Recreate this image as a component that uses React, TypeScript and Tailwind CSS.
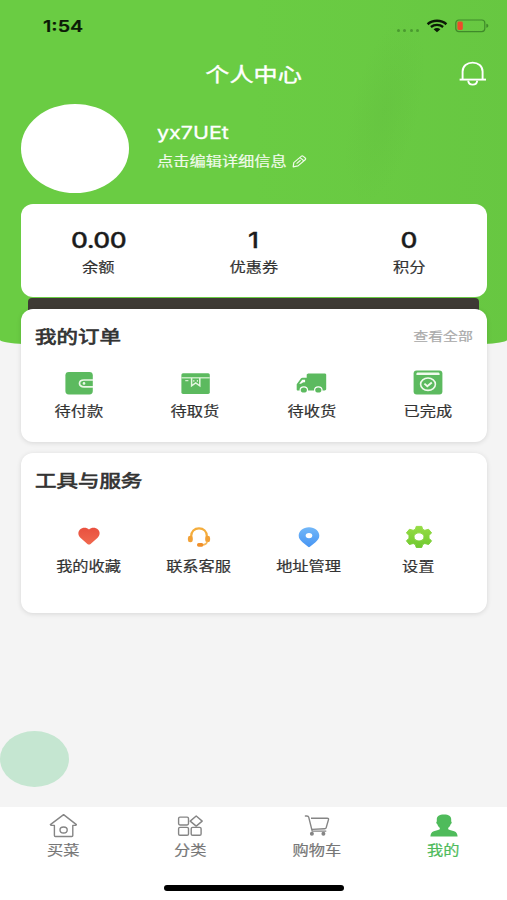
import type { ReactNode } from 'react'
import clsx from 'clsx'

// Glyphs are wide in this layout, so every label is stretched horizontally
function Label({ children, className }: { children: ReactNode; className?: string }) {
  return (
    <span className={clsx('inline-block whitespace-nowrap scale-x-[1.22]', className)}>{children}</span>
  )
}

function WifiIcon() {
  return (
    <svg width="22" height="14" viewBox="0 0 22 14" fill="none" stroke="#0b1a06">
      <path d="M1.6 5.2C6.8 0.6 15.2 0.6 20.4 5.2" strokeWidth="2.5" />
      <path d="M4.9 8C8.4 5.1 13.6 5.1 17.1 8" strokeWidth="2.3" />
      <path d="M7.6 10.2C9.6 8.6 12.4 8.6 14.4 10.2L11 13.2Z" fill="#0b1a06" stroke="none" />
    </svg>
  )
}

function BatteryIcon() {
  return (
    <svg width="34" height="14" viewBox="0 0 34 14" fill="none">
      <rect x="0.8" y="1" width="29" height="11.6" rx="3" stroke="#3f8a2a" strokeWidth="1.2" />
      <rect x="2.4" y="2.6" width="5.4" height="8.4" rx="1.4" fill="#ee4a2c" />
      <path d="M31.3 4.8C34 5.4 34 8.2 31.3 8.8Z" fill="#3f8a2a" />
    </svg>
  )
}

function BellIcon() {
  return (
    <svg width="28" height="26" viewBox="0 0 28 26" fill="none" stroke="#fff" strokeWidth="1.9">
      <path d="M3.6 18.6V10.5C3.6 5.2 8 1.6 13.6 1.6S23.6 5.2 23.6 10.5V18.6" />
      <path d="M0.6 18.6H27" />
      <path d="M9.2 19.6C9.8 25 17.6 25 18.2 19.6" />
    </svg>
  )
}

function PencilIcon() {
  return (
    <svg width="15" height="13" viewBox="0 0 15 13" fill="none" stroke="#effae9" strokeWidth="1.2" strokeLinejoin="round">
      <path d="M1.2 11.8L1.8 7.6L9.2 1.4C9.8 0.9 10.7 0.9 11.3 1.4L13.2 3C13.8 3.5 13.8 4.2 13.2 4.7L6 10.9Z" />
      <path d="M8 2.6L11.8 5.8M4.6 8.6L8.6 5.2" />
    </svg>
  )
}

function WalletIcon() {
  return (
    <svg width="29" height="24" viewBox="0 0 29 24" fill="none">
      <rect x="1.4" y="1" width="27.4" height="22.4" rx="3.4" fill="#5cba5f" />
      <path d="M29 9H20C14 9 14 15.8 20 15.8H29" stroke="#e9f8e6" strokeWidth="1.7" />
      <circle cx="20" cy="12.4" r="1.3" fill="#e9f8e6" />
    </svg>
  )
}

function PackageIcon() {
  return (
    <svg width="29" height="24" viewBox="0 0 29 24" fill="none">
      <rect x="0.4" y="2.3" width="28.4" height="20.6" rx="1.6" fill="#5cba5f" />
      <path d="M0.4 6.8H28.8" stroke="#d5f0d0" strokeWidth="1.3" />
      <path d="M10.6 7V14.8L14.7 12L18.8 14.8V7" stroke="#e4f6e0" strokeWidth="1.5" />
      <path d="M12.8 9V10.8M16.4 9V10.8M4.3 9.6H7.4" stroke="#d5f0d0" strokeWidth="1.2" />
    </svg>
  )
}

function TruckIcon() {
  return (
    <svg width="31" height="24" viewBox="0 0 31 24" fill="none">
      <path d="M13 2.4H28.6C29.6 2.4 30.2 3 30.2 3.8V18.1C30.2 19 29.6 19.5 28.6 19.5H1.8C1.1 19.5 0.7 19.1 0.7 18.4V13.2L4.9 7.6C5.3 7 5.9 6.8 6.6 6.8H10.7V3.8C10.7 3 11.6 2.4 13 2.4Z" fill="#5cba5f" />
      <path d="M3.2 12.8L6.2 8.7H9.1V11.2C7.2 11.2 5.4 11.8 5.2 12.8Z" fill="#fff" />
      <ellipse cx="7.8" cy="19" rx="4.3" ry="3.8" fill="#fff" />
      <ellipse cx="22.3" cy="19" rx="4.3" ry="3.8" fill="#fff" />
      <ellipse cx="7.8" cy="19" rx="3.1" ry="2.6" fill="#5cba5f" />
      <ellipse cx="22.3" cy="19" rx="3.1" ry="2.6" fill="#5cba5f" />
    </svg>
  )
}

function DoneIcon() {
  return (
    <svg width="30" height="25" viewBox="0 0 30 25" fill="none">
      <rect x="0.6" y="0.6" width="28.8" height="23.8" rx="3" fill="#5cba5f" />
      <path d="M3.4 4.9V4C3.4 3.2 4 2.6 5 2.6H25C26 2.6 26.6 3.2 26.6 4V4.9Z" fill="#f0faed" />
      <ellipse cx="15" cy="14.2" rx="7.4" ry="6.2" stroke="#f0faed" strokeWidth="1.6" />
      <path d="M11.4 13.6L14.3 16.2L18.8 12.4" stroke="#f0faed" strokeWidth="1.9" />
    </svg>
  )
}

function HeartIcon() {
  return (
    <svg width="24" height="22" viewBox="0 0 24 22">
      <defs>
        <linearGradient id="heart" x1="0" y1="0" x2="0" y2="1">
          <stop offset="0" stopColor="#e9503f" />
          <stop offset="1" stopColor="#f0694f" />
        </linearGradient>
      </defs>
      <path d="M12 3.6C14.2 1.2 18.6 1.1 21 3.5C23.4 6 23 9.2 20.6 11.7L13.6 17.9C12.5 18.8 11.5 18.8 10.4 17.9L3.4 11.7C1 9.2 0.6 6 3 3.5C5.4 1.1 9.8 1.2 12 3.6Z" fill="url(#heart)" />
    </svg>
  )
}

function HeadsetIcon() {
  return (
    <svg width="24" height="22" viewBox="0 0 24 22" fill="none">
      <path d="M4.2 11.5V10C4.2 5.4 7.4 2.3 12 2.3S19.8 5.4 19.8 10V11.5" stroke="#f4ad3c" strokeWidth="2.2" />
      <rect x="0.9" y="9.8" width="4.9" height="6.4" rx="2.3" fill="#f2a136" />
      <rect x="18.2" y="9.8" width="4.9" height="6.4" rx="2.3" fill="#f2a136" />
      <path d="M20.2 15.5C19.8 17.8 18 18.8 15 18.9" stroke="#f6b95c" strokeWidth="1.5" />
      <rect x="10" y="17.1" width="6.4" height="3.6" rx="1.7" fill="#f0902c" />
    </svg>
  )
}

function PinIcon() {
  return (
    <svg width="24" height="22" viewBox="0 0 24 22">
      <defs>
        <linearGradient id="pin" x1="0" y1="0" x2="0" y2="1">
          <stop offset="0" stopColor="#72b7f8" />
          <stop offset="1" stopColor="#4795f3" />
        </linearGradient>
      </defs>
      <path d="M12 1.2C18 1.2 22.3 4.9 22.3 9.8C22.3 12.5 20.6 14.5 18.5 16.2L12.9 20.8C12.3 21.3 11.7 21.3 11.1 20.8L5.5 16.2C3.4 14.5 1.7 12.5 1.7 9.8C1.7 4.9 6 1.2 12 1.2Z" fill="url(#pin)" />
      <ellipse cx="12" cy="9.6" rx="3.3" ry="2.6" fill="#fff" />
    </svg>
  )
}

function GearIcon() {
  return (
    <svg width="28" height="24" viewBox="0 0 28 24">
      <defs>
        <linearGradient id="gear" x1="0" y1="0" x2="0" y2="1">
          <stop offset="0" stopColor="#96dc45" />
          <stop offset="1" stopColor="#6fc92f" />
        </linearGradient>
      </defs>
      <path
        fillRule="evenodd"
        fill="url(#gear)"
        stroke="url(#gear)"
        strokeWidth="1"
        strokeLinejoin="round"
        d="M11.2 1.4H16.8L17.6 4.3L19.8 5.3L23.6 4.3L26.6 8L24 10.2V13.4L26.6 15.8L23.6 19.5L19.8 18.5L17.6 19.6L16.8 22.4H11.2L10.4 19.6L8.2 18.5L4.4 19.5L1.4 15.8L4 13.4V10.2L1.4 8L4.4 4.3L8.2 5.3L10.4 4.3ZM14 7.8C11.2 7.8 9 9.6 9 11.9S11.2 16 14 16S19 14.2 19 11.9S16.8 7.8 14 7.8Z"
      />
    </svg>
  )
}

function HomeIcon() {
  return (
    <svg width="28" height="25" viewBox="0 0 28 25" fill="none" stroke="#858585" strokeWidth="1.4" strokeLinejoin="round">
      <path d="M14.6 1.6L1.4 11.6L2.2 12.4H5.4V22.6C5.4 23.2 5.8 23.5 6.4 23.5H22.8C23.4 23.5 23.8 23.2 23.8 22.6V12.4H26.8L27.4 11.6Z" />
      <ellipse cx="14.6" cy="17" rx="3.6" ry="3" />
    </svg>
  )
}

function CategoryIcon() {
  return (
    <svg width="28" height="25" viewBox="0 0 28 25" fill="none" stroke="#858585" strokeWidth="1.4" strokeLinejoin="round">
      <rect x="2.6" y="4.1" width="9.9" height="7.9" rx="1.4" />
      <rect x="2.6" y="14.4" width="9.9" height="7.9" rx="1.4" />
      <rect x="15.2" y="14.4" width="9.9" height="7.9" rx="1.4" />
      <path d="M20.2 3L26.2 8.1L20.2 13.1L14.2 8.1Z" />
    </svg>
  )
}

function CartIcon() {
  return (
    <svg width="28" height="25" viewBox="0 0 28 25" fill="none" stroke="#858585" strokeWidth="1.4" strokeLinejoin="round">
      <path d="M2.4 3H3.9C5 3 5.5 3.4 5.7 4.2L9.2 18.1H22.8" strokeLinecap="round" />
      <path d="M8 5.2H24.2C25.2 5.2 25.7 5.7 25.5 6.6L23.2 14.6C23 15.4 22.5 15.7 21.7 15.7L9 16.4" />
      <circle cx="8.9" cy="20.8" r="1.3" fill="#858585" />
      <circle cx="20.4" cy="20.8" r="1.3" fill="#858585" />
    </svg>
  )
}

function UserIcon() {
  return (
    <svg width="28" height="25" viewBox="0 0 28 25" fill="#4fbb5b">
      <path d="M14 1.4C18.8 1.4 21.2 3.1 21.2 6.2V8.4C22 8.9 21.9 10.3 20.8 10.9C20.2 12.8 19.4 13.8 18.2 14.8V16.2C19.2 17 22 17.4 24.2 18.3C26.6 19.3 27.4 20.8 27.6 23.6H0.4C0.6 20.8 1.4 19.3 3.8 18.3C6 17.4 8.8 17 9.8 16.2V14.8C8.6 13.8 7.8 12.8 7.2 10.9C6.1 10.3 6 8.9 6.8 8.4V6.2C6.8 3.1 9.2 1.4 14 1.4Z" />
    </svg>
  )
}

const stats = [
  { value: '0.00', label: '余额' },
  { value: '1', label: '优惠券' },
  { value: '0', label: '积分' },
]

const orders = [
  { label: '待付款', icon: <WalletIcon /> },
  { label: '待取货', icon: <PackageIcon /> },
  { label: '待收货', icon: <TruckIcon /> },
  { label: '已完成', icon: <DoneIcon /> },
]

const services = [
  { label: '我的收藏', icon: <HeartIcon /> },
  { label: '联系客服', icon: <HeadsetIcon /> },
  { label: '地址管理', icon: <PinIcon /> },
  { label: '设置', icon: <GearIcon /> },
]

const tabs = [
  { label: '买菜', icon: <HomeIcon /> },
  { label: '分类', icon: <CategoryIcon /> },
  { label: '购物车', icon: <CartIcon /> },
  { label: '我的', icon: <UserIcon />, active: true },
]

export default function App() {
  return (
    <div className="flex h-[900px] w-[507px] flex-col overflow-hidden bg-[#f4f4f4] font-['Inter','Noto_Sans_CJK_SC',sans-serif] text-[#333] [-webkit-text-stroke:0.2px]">
      {/* Header */}
      <header className="relative h-[350px] shrink-0 overflow-hidden rounded-b-[50%_10px] bg-[#6acc43]">
        <svg className="absolute inset-0" width="507" height="350" viewBox="0 0 507 350">
          <defs>
            <linearGradient id="shade" x1="0" y1="0" x2="1" y2="0">
              <stop offset="0" stopColor="#5fb83d" stopOpacity="0" />
              <stop offset="0.5" stopColor="#5fb83d" stopOpacity="0.1" />
              <stop offset="1" stopColor="#5fb83d" stopOpacity="0.25" />
            </linearGradient>
            <radialGradient id="fold">
              <stop offset="0" stopColor="#5fb83d" stopOpacity="0.25" />
              <stop offset="1" stopColor="#5fb83d" stopOpacity="0" />
            </radialGradient>
          </defs>
          <path d="M250 0H507V350H250Z" fill="url(#shade)" />
          <ellipse cx="385" cy="110" rx="34" ry="95" transform="rotate(14 385 110)" fill="url(#fold)" />
        </svg>

        <div className="relative">
          {/* Status bar */}
          <div className="flex h-[52px] items-center justify-between pr-[18px] pl-[43px]">
            <Label className="origin-left text-[16.2px] font-semibold text-[#0b1a06]">1:54</Label>
            <div className="flex items-center">
              <div className="mt-[8px] mr-[7px] flex gap-[3.5px]">
                {[0, 1, 2, 3].map((i) => (
                  <span key={i} className="h-[3px] w-[3px] rounded-full bg-[#4a9a30]" />
                ))}
              </div>
              <WifiIcon />
              <span className="w-[7px]" />
              <BatteryIcon />
            </div>
          </div>

          {/* Title */}
          <div className="grid h-[44px] grid-cols-[1fr_auto_1fr] items-center pr-[20px] pl-[20px]">
            <span />
            <Label className="pt-[3px] text-[19.8px] leading-none text-white [-webkit-text-stroke:0.4px]">个人中心</Label>
            <div className="justify-self-end">
              <BellIcon />
            </div>
          </div>

          {/* Profile */}
          <div className="flex px-[21px] pt-[8px]">
            <div className="h-[88.5px] w-[108px] rounded-[50%] bg-white" />
            <div className="ml-[28px] flex flex-col items-start pt-[17px]">
              <Label className="origin-left text-[17.6px] leading-[24px] text-white [-webkit-text-stroke:0.3px]">yx7UEt</Label>
              <div className="mt-[6px] flex items-center">
                <Label className="origin-left text-[13.3px] leading-[20px] text-[#effae9]">点击编辑详细信息</Label>
                <span className="ml-[29px]">
                  <PencilIcon />
                </span>
              </div>
            </div>
          </div>

          {/* Balance card */}
          <div className="mx-[20.5px] mt-[11.5px] grid h-[93px] grid-cols-3 rounded-[12px] bg-white pt-[23px]">
            {stats.map((item) => (
              <div key={item.label} className="flex flex-col items-center">
                <Label className="text-[21.5px] leading-[26px] font-medium tracking-[-0.5px] text-[#1c1c1c] [-webkit-text-stroke:0.3px]">
                  {item.value}
                </Label>
                <Label className="mt-[4px] text-[13.3px] leading-[20px]">{item.label}</Label>
              </div>
            ))}
          </div>
        </div>
      </header>

      <main className="relative -mt-[52.5px] flex-1">
        <div className="mx-[28px] h-[20px] rounded-t-[4px] bg-[#3e3a34]" />

        {/* Orders */}
        <section className="mx-[20.5px] -mt-[8.5px] h-[133px] rounded-[12px] bg-white pt-[16px] shadow-[0_1px_5px_rgba(0,0,0,0.12)]">
          <div className="flex h-[24px] items-center justify-between px-[14px]">
            <Label className="origin-left text-[17.6px] [-webkit-text-stroke:0.7px]">我的订单</Label>
            <Label className="origin-right text-[12.2px] text-[#aaa]">查看全部</Label>
          </div>
          <div className="mt-[21px] grid grid-cols-4">
            {orders.map((item) => (
              <div key={item.label} className="flex flex-col items-center">
                <div className="flex h-[25px] items-center">{item.icon}</div>
                <Label className="mt-[6px] text-[13.3px] leading-[20px]">{item.label}</Label>
              </div>
            ))}
          </div>
        </section>

        {/* Tools and services */}
        <section className="mx-[20.5px] mt-[11px] h-[160px] rounded-[12px] bg-white pt-[16px] shadow-[0_1px_5px_rgba(0,0,0,0.12)]">
          <div className="flex h-[24px] items-center px-[14px]">
            <Label className="origin-left text-[17.6px] [-webkit-text-stroke:0.7px]">工具与服务</Label>
          </div>
          <div className="mt-[32px] grid grid-cols-4 px-[13px]">
            {services.map((item) => (
              <div key={item.label} className="flex flex-col items-center">
                <div className="flex h-[24px] items-center">{item.icon}</div>
                <Label className="mt-[7px] text-[13.3px] leading-[20px]">{item.label}</Label>
              </div>
            ))}
          </div>
        </section>

        <div className="mt-[117.5px] h-[56px] w-[68.5px] rounded-[50%] bg-[#c5e6d1]" />
      </main>

      {/* Tab bar */}
      <nav className="flex h-[93px] shrink-0 flex-col items-center bg-white pt-[6px]">
        <div className="grid w-full grid-cols-4">
          {tabs.map((tab) => (
            <div key={tab.label} className="flex flex-col items-center">
              {tab.icon}
              <Label
                className={clsx('mt-[2px] text-[13.3px] leading-[20px]', tab.active ? 'text-[#4fbb5b]' : 'text-[#777]')}
              >
                {tab.label}
              </Label>
            </div>
          ))}
        </div>
        <div className="mt-[25px] h-[6px] w-[180px] rounded-full bg-black" />
      </nav>
    </div>
  )
}
